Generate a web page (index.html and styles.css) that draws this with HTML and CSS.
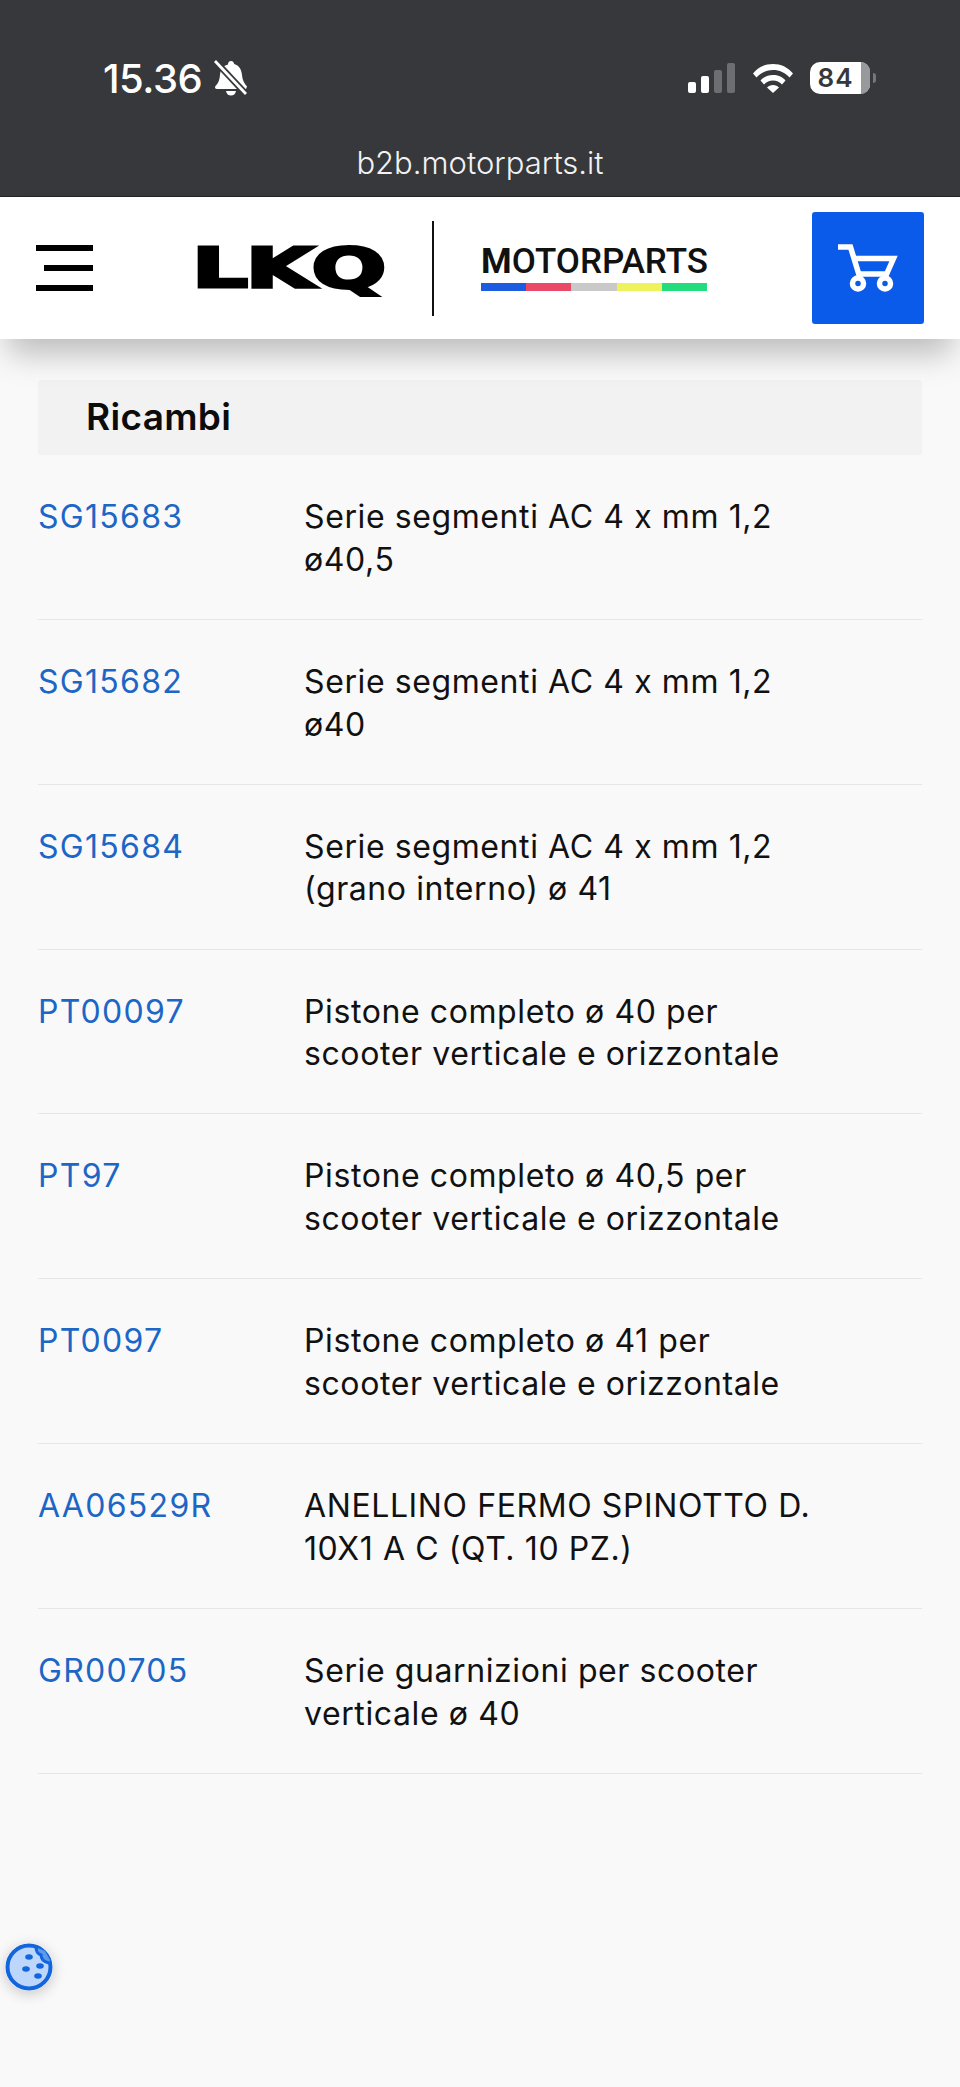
FILE: index.html
```html
<!DOCTYPE html>
<html lang="it">
<head>
  <meta charset="UTF-8" />
  <title>Ricambi - LKQ Motorparts</title>
  <link rel="stylesheet" href="styles.css">
</head>
<body>
  <div class="topbar">
    <div class="status">
      <div class="status-left">
        <span class="clock">15.36</span>
        <svg class="bell" viewBox="0 0 34 36" width="34" height="36">
          <path d="M17 1c2 0 3 1.500 3.200 3 5 1.500 7.300 5.500 7.800 11 .4 5 2 8 5 11.500l-1 2.500H3c-2 0-2.500-2-1.500-3 3-3 4-6 4.500-11 .5-5 2-9 8-10.500C14 2.500 15 1 17 1zM12 31h10c-.5 3-2.500 4.500-5 4.500S12.500 34 12 31z" fill="#fff"/>
          <path d="M2 2l30 32" stroke="#36383c" stroke-width="6.500"/>
          <path d="M1 1l31 33" stroke="#fff" stroke-width="2.800"/>
        </svg>
      </div>
      <div class="status-right">
        <svg viewBox="0 0 48 30" width="48" height="30">
          <rect x="0" y="19" width="8" height="11" rx="2" fill="#fff"/>
          <rect x="13" y="13" width="8" height="17" rx="2" fill="#fff"/>
          <rect x="26" y="7" width="8" height="23" rx="2" fill="#6c6e71"/>
          <rect x="39" y="0" width="8" height="30" rx="2" fill="#6c6e71"/>
        </svg>
        <svg class="wifi" viewBox="0 0 40 30" width="40" height="30">
          <path d="M0 10.500C5.500 4 12 1 20 1s14.500 3 20 9.500l-3.500 4C32 9.500 26.500 7 20 7S8 9.500 3.500 14.500z" fill="#fff"/>
          <path d="M7.500 17.500C11 13.500 15 12 20 12s9 1.500 12.500 5.500L29 21.500c-2.500-2.700-5.500-4-9-4s-6.500 1.300-9 4z" fill="#fff"/>
          <path d="M14 24.500c1.500-1.500 3.500-2.500 6-2.500s4.500 1 6 2.500L20 30z" fill="#fff"/>
        </svg>
        <div class="battery">
          <span class="battery-num">84</span>
          <span class="battery-rest"></span>
          <span class="battery-tip"></span>
        </div>
      </div>
    </div>
    <div class="url">b2b.motorparts.it</div>
  </div>

  <header class="header">
    <button class="burger" aria-label="Menu"><span></span><span class="short"></span><span></span></button>
    <div class="brand">
      <span class="lkq"><span class="lkq-text">LKQ</span></span>
      <span class="brand-sep"></span>
      <div class="motorparts">
        <div class="mp-text"><b>M</b>OTORPARTS</div>
        <div class="mp-bar"><i class="c1"></i><i class="c2"></i><i class="c3"></i><i class="c4"></i><i class="c5"></i></div>
      </div>
    </div>
    <a class="cart" href="#" aria-label="Carrello">
      <svg viewBox="0 0 60 48" width="60" height="48" fill="none" stroke="#fff" stroke-width="5.500">
        <path d="M0 3h12.500L22 34"/>
        <path d="M18 14.500H55.500L46 36M22 30H49"/>
        <circle cx="20" cy="39.500" r="5.500" fill="#0b5bea"/>
        <circle cx="47" cy="39.500" r="5.500" fill="#0b5bea"/>
      </svg>
    </a>
  </header>

  <main class="content">
    <h2 class="section-title">Ricambi</h2>
    <div class="parts">
      <div class="part"><a href="#">SG15683</a><p>Serie segmenti AC 4 x mm 1,2 ø40,5</p></div>
      <div class="part"><a href="#">SG15682</a><p>Serie segmenti AC 4 x mm 1,2 ø40</p></div>
      <div class="part"><a href="#">SG15684</a><p>Serie segmenti AC 4 x mm 1,2 (grano interno) ø 41</p></div>
      <div class="part"><a href="#">PT00097</a><p>Pistone completo ø 40 per scooter verticale e orizzontale</p></div>
      <div class="part"><a href="#">PT97</a><p>Pistone completo ø 40,5 per scooter verticale e orizzontale</p></div>
      <div class="part"><a href="#">PT0097</a><p>Pistone completo ø 41 per scooter verticale e orizzontale</p></div>
      <div class="part"><a href="#">AA06529R</a><p>ANELLINO FERMO SPINOTTO D. 10X1 A C (QT. 10 PZ.)</p></div>
      <div class="part"><a href="#">GR00705</a><p>Serie guarnizioni per scooter verticale ø 40</p></div>
    </div>
  </main>

  <button class="cookie" aria-label="Cookie">
    <svg viewBox="0 0 48 48" width="48" height="48">
      <circle cx="24" cy="24" r="21.500" fill="#bcd7fb" stroke="#1265dc" stroke-width="4"/>
      <path d="M33 5c0 4 2 6 4 7 0 4 3 7 7 8l1-3-5-9z" fill="#5b9bea"/>
      <path d="M31 4c0 5 2 7 5 8 0 4 3 7 8 8" fill="none" stroke="#1265dc" stroke-width="3"/>
      <ellipse cx="24" cy="14" rx="3.800" ry="2.800" fill="#1265dc"/>
      <ellipse cx="35" cy="23" rx="3.800" ry="2.800" fill="#1265dc"/>
      <ellipse cx="21" cy="26" rx="3.800" ry="2.800" fill="#1265dc"/>
      <ellipse cx="33" cy="33" rx="3.800" ry="2.800" fill="#1265dc"/>
    </svg>
  </button>
</body>
</html>
```

FILE: styles.css
```css
body {
  margin: 0;
  background: #f9f9f9;
  font-family: Inter, "Liberation Sans", sans-serif;
  color: #111;
  height: 2087px;
  overflow: hidden;
  position: relative;
}

/* phone status + address */
.topbar {
  height: 197px;
  box-sizing: border-box;
  background: #36383c;
  color: #fff;
  border-bottom: 1px solid #232427;
}
.status {
  display: flex;
  justify-content: space-between;
  align-items: center;
  height: 30px;
  padding: 63px 90px 0 103px;
}
.status-left {
  display: flex;
  align-items: center;
  gap: 12px;
}
.clock {
  font-size: 40px;
  font-weight: 500;
  letter-spacing: -0.5px;
}
.status-right {
  display: flex;
  align-items: center;
  gap: 17px;
}
.battery {
  display: flex;
  position: relative;
  width: 60px;
  height: 32px;
  border-radius: 10px;
  background: #fff;
  color: #36383c;
}
.battery-num {
  width: 51px;
  text-align: center;
  font-size: 26px;
  font-weight: 600;
  letter-spacing: 1px;
  line-height: 32px;
}
.battery-rest {
  width: 9px;
  background: #98999b;
  border-radius: 0 10px 10px 0;
}
.battery-tip {
  position: absolute;
  right: -6px;
  top: 11px;
  width: 3px;
  height: 10px;
  background: #777;
  border-radius: 0 3px 3px 0;
}
.url {
  margin-top: 51px;
  text-align: center;
  font-size: 31px;
  font-weight: 300;
  line-height: 38px;
  color: #f2f2f2;
}

/* site header */
.header {
  position: relative;
  z-index: 2;
  display: flex;
  align-items: center;
  height: 142px;
  background: #fff;
  box-shadow: 0 22px 30px -8px rgba(0, 0, 0, 0.25);
}
.burger {
  display: flex;
  flex-direction: column;
  align-items: flex-end;
  gap: 14px;
  width: 57px;
  margin-left: 36px;
  padding: 0;
  border: 0;
  background: none;
}
.burger span {
  display: block;
  width: 57px;
  height: 6px;
  background: #000;
}
.burger .short {
  width: 49px;
}
.brand {
  display: flex;
  align-items: center;
  margin-left: 99px;
}
.lkq {
  display: block;
  width: 192px;
  height: 50px;
  color: #000;
}
.lkq-text {
  display: block;
  font-family: "DejaVu Sans", sans-serif;
  font-weight: 700;
  font-size: 55px;
  line-height: 50px;
  letter-spacing: -1.500px;
  -webkit-text-stroke: 3px #000;
  transform: scaleX(1.6);
  transform-origin: left center;
  white-space: nowrap;
}
.brand-sep {
  width: 2px;
  height: 95px;
  margin-left: 48px;
  background: #111;
}
.motorparts {
  margin-left: 47px;
  width: 226px;
}
.mp-text {
  font-family: Roboto, sans-serif;
  font-size: 35px;
  font-weight: 500;
  line-height: 32px;
  white-space: nowrap;
}
.mp-text b {
  font-weight: 700;
}
.mp-bar {
  display: flex;
  height: 8px;
  margin-top: 5px;
}
.mp-bar i {
  flex: 1;
}
.c1 { background: #1d5be0; }
.c2 { background: #ea4a68; }
.c3 { background: #c9c9c9; }
.c4 { background: #eef25c; }
.c5 { background: #23dc7c; }
.cart {
  display: flex;
  align-items: center;
  justify-content: center;
  width: 112px;
  height: 112px;
  margin-left: auto;
  margin-right: 36px;
  border-radius: 3px;
  background: #0b5bea;
}

/* list */
.content {
  padding: 41px 38px 0;
}
.section-title {
  margin: 0;
  height: 75px;
  padding-left: 48px;
  background: #f2f2f2;
  border-radius: 3px;
  font-size: 37px;
  font-weight: 600;
  letter-spacing: 0.300px;
  line-height: 74px;
  color: #0c0c0c;
}
.part {
  display: grid;
  grid-template-columns: 266px 1fr;
  box-sizing: border-box;
  height: 164.860px;
  padding-top: 41px;
  border-bottom: 1px solid #e6e6e6;
  font-size: 32px;
  line-height: 42.700px;
}
.part a {
  color: #1c66c6;
  letter-spacing: 1.300px;
  text-decoration: none;
}
.part p {
  margin: 0;
  max-width: 530px;
  letter-spacing: 0.600px;
}
.cookie {
  position: absolute;
  left: 5px;
  top: 1943px;
  width: 48px;
  height: 48px;
  padding: 0;
  border: 0;
  border-radius: 50%;
  background: none;
  box-shadow: 0 3px 14px rgba(0, 0, 0, 0.2);
}
```
